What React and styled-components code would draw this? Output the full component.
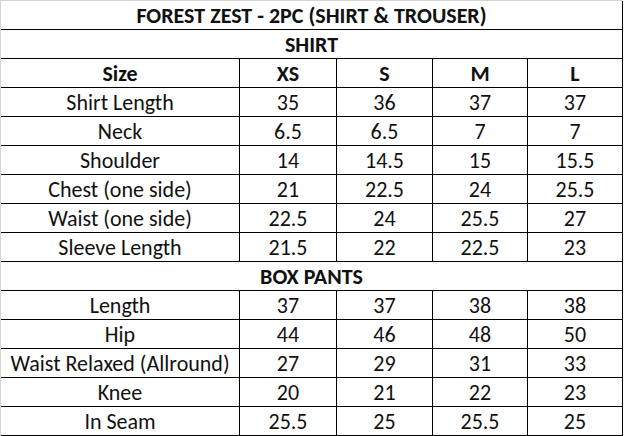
import styled, { createGlobalStyle } from "styled-components";

const GlobalStyle = createGlobalStyle`
  html, body {
    margin: 0;
    padding: 0;
    background: #ffffff;
  }
  body {
    font-family: Calibri, Carlito, Lato, "Liberation Sans", sans-serif;
    color: #111111;
  }
`;

const Sheet = styled.div`
  display: grid;
  grid-template-columns: 239px 97px 96px 95px 95px;
  grid-auto-rows: 29px;
  width: 622px;
  border-left: 1px solid #d4d4d4;
  border-top: 1px solid #d4d4d4;
`;

const Cell = styled.div`
  box-sizing: border-box;
  display: flex;
  align-items: center;
  justify-content: center;
  border-bottom: 1px solid #000;
  border-right: 1px solid #000;
  font-size: 22px;
  line-height: 1;
  font-weight: ${(props) => (props.$bold ? 700 : 400)};
  white-space: nowrap;
  padding-top: 1px;
`;

const SpanCell = styled(Cell)`
  grid-column: 1 / -1;
  font-weight: 700;
`;

const sizes = ["XS", "S", "M", "L"];

const shirt = [
  ["Shirt Length", "35", "36", "37", "37"],
  ["Neck", "6.5", "6.5", "7", "7"],
  ["Shoulder", "14", "14.5", "15", "15.5"],
  ["Chest (one side)", "21", "22.5", "24", "25.5"],
  ["Waist (one side)", "22.5", "24", "25.5", "27"],
  ["Sleeve Length", "21.5", "22", "22.5", "23"],
];

const pants = [
  ["Length", "37", "37", "38", "38"],
  ["Hip", "44", "46", "48", "50"],
  ["Waist Relaxed (Allround)", "27", "29", "31", "33"],
  ["Knee", "20", "21", "22", "23"],
  ["In Seam", "25.5", "25", "25.5", "25"],
];

function Rows({ rows }) {
  return rows.map((row) =>
    row.map((value, i) => <Cell key={row[0] + i}>{value}</Cell>)
  );
}

export default function App() {
  return (
    <>
      <GlobalStyle />
      <Sheet>
        <SpanCell>FOREST ZEST - 2PC (SHIRT &amp; TROUSER)</SpanCell>
        <SpanCell>SHIRT</SpanCell>
        <Cell $bold>Size</Cell>
        {sizes.map((s) => (
          <Cell key={s} $bold>
            {s}
          </Cell>
        ))}
        <Rows rows={shirt} />
        <SpanCell>BOX PANTS</SpanCell>
        <Rows rows={pants} />
      </Sheet>
    </>
  );
}
